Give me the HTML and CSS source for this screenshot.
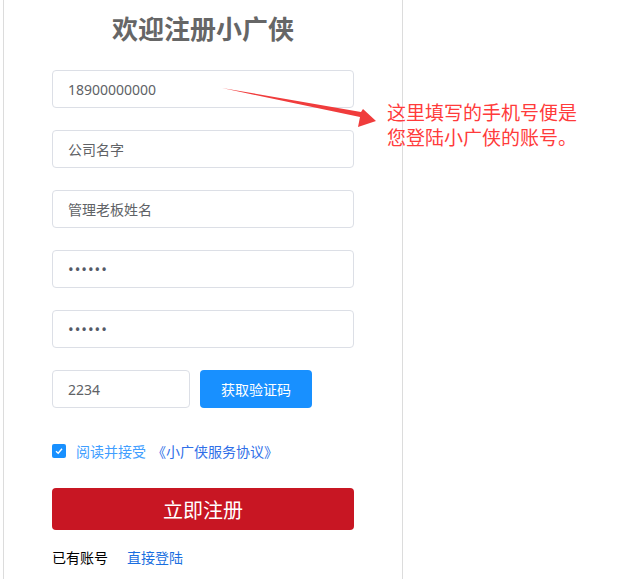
FILE: index.html
```html
<!DOCTYPE html>
<html lang="zh-CN">
  <head>
    <meta charset="utf-8" />
    <title>欢迎注册小广侠</title>
    <link rel="stylesheet" href="styles.css">
  </head>
  <body>
    <div class="page">
      <div class="register-box">
        <h2 class="title">欢迎注册小广侠</h2>
        <form class="register-form">
          <input class="field" type="text" value="18900000000" />
          <input class="field" type="text" placeholder="公司名字" />
          <input class="field" type="text" placeholder="管理老板姓名" />
          <input class="field" type="password" value="123456" />
          <input class="field" type="password" value="123456" />
          <div class="code-row">
            <input class="field code-input" type="text" value="2234" />
            <button type="button" class="code-btn">获取验证码</button>
          </div>
          <label class="agree">
            <span class="check">
              <svg width="10" height="10" viewBox="0 0 10 10"><path d="M2 5.2 L4.2 7.2 L8 2.8" fill="none" stroke="#fff" stroke-width="1.4" /></svg>
            </span>
            <span class="agree-text">阅读并接受</span>
            <a class="agree-link" href="#">《小广侠服务协议》</a>
          </label>
          <button type="button" class="submit-btn">立即注册</button>
          <div class="login-row">
            <span>已有账号</span>
            <a href="#">直接登陆</a>
          </div>
        </form>
      </div>

      <!-- annotation -->
      <svg class="arrow" width="160" height="44" viewBox="0 0 160 44">
        <polygon points="0,1 139,25 141,22 154,34 136,40 138,30" fill="#f03c3c" />
      </svg>
      <p class="note">这里填写的手机号便是<br />您登陆小广侠的账号。</p>
    </div>
  </body>
</html>
```

FILE: styles.css
```css
* {
  margin: 0;
  padding: 0;
  box-sizing: border-box;
  font-family: "Noto Sans", "Noto Sans CJK SC", sans-serif;
}
body {
  background-color: #ffffff;
}
.page {
  position: relative;
  height: 579px;
}
.register-box {
  margin-left: 3px;
  width: 400px;
  height: 579px;
  border-left: 1px solid #dcdcdc;
  border-right: 1px solid #dcdcdc;
  padding: 0 48px;
}
.title {
  text-align: center;
  font-size: 26px;
  font-weight: 700;
  color: #666666;
  line-height: 32px;
  padding-top: 13px;
  height: 70px;
}
.register-form {
  display: flex;
  flex-direction: column;
  gap: 22px;
}
.field {
  width: 100%;
  height: 38px;
  border: 1px solid #dcdfe6;
  border-radius: 4px;
  padding: 0 15px;
  font-size: 14px;
  color: #606266;
  outline: none;
}
.field::placeholder {
  color: #606266;
}
input[type="password"] {
  font-size: 15px;
  letter-spacing: 1px;
  color: #555a66;
}
.code-row {
  display: flex;
  gap: 10px;
}
.code-input {
  width: 138px;
}
.code-btn {
  width: 112px;
  height: 38px;
  border: none;
  border-radius: 4px;
  background-color: #1890ff;
  color: #ffffff;
  font-size: 14px;
}
.agree {
  display: flex;
  align-items: center;
  height: 20px;
  margin-top: 11px;
  font-size: 14px;
}
.check {
  width: 14px;
  height: 14px;
  border-radius: 2px;
  background-color: #1890ff;
  display: flex;
  align-items: center;
  justify-content: center;
  margin-right: 10px;
}
.agree-text {
  color: #409eff;
}
.agree-link {
  color: #2f6fe8;
  text-decoration: none;
  margin-left: 6px;
}
.submit-btn {
  margin-top: 5px;
  height: 42px;
  border: none;
  border-radius: 4px;
  background-color: #c81623;
  color: #ffffff;
  font-size: 20px;
}
.login-row {
  display: flex;
  gap: 19px;
  font-size: 14px;
  margin-top: -5px;
  color: #000000;
}
.login-row a {
  color: #1a6fe0;
  text-decoration: none;
}
.arrow {
  position: absolute;
  left: 222px;
  top: 87px;
}
.note {
  position: absolute;
  left: 387px;
  top: 101px;
  font-size: 19px;
  line-height: 25px;
  color: #ff3b3b;
}
```
